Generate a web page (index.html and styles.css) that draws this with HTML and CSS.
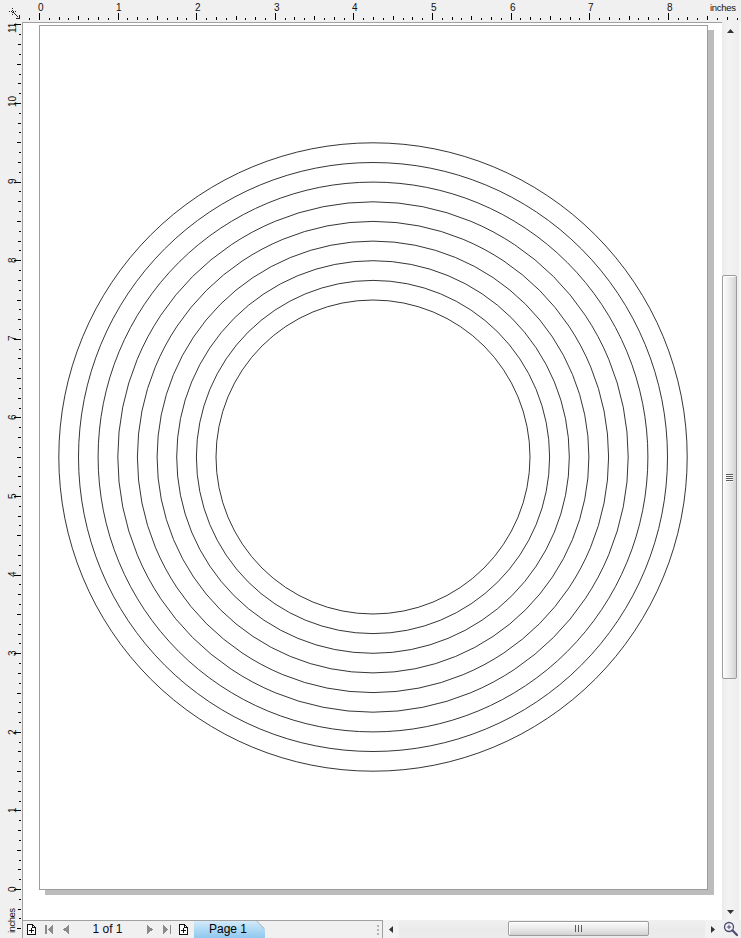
FILE: index.html
```html
<!DOCTYPE html>
<html>
<head>
<meta charset="utf-8">
<title>Drawing</title>
<link rel="stylesheet" href="styles.css">
</head>
<body>
<div class="app">
  <div class="corner">
    <svg width="22" height="22" viewBox="0 0 22 22" class="corner-icon">
      <path d="M9 11.5h7" stroke="#222" stroke-dasharray="1 1"/>
      <path d="M12.5 8v7" stroke="#222" stroke-dasharray="1 1"/>
      <path d="M13.5 12.5l5 5M19.5 15v3.5H16" stroke="#222" fill="none"/>
    </svg>
  </div>

  <div class="hruler">
    <svg class="ruler-svg" width="719" height="22" viewBox="22 0 719 22">
      <path id="hticks" class="ticks" d=""/>
      <g class="ruler-num">
        <text x="38" y="11">0</text>
        <text x="116" y="11">1</text>
        <text x="195" y="11">2</text>
        <text x="274" y="11">3</text>
        <text x="352" y="11">4</text>
        <text x="431" y="11">5</text>
        <text x="510" y="11">6</text>
        <text x="588" y="11">7</text>
        <text x="667" y="11">8</text>
        <text x="710" y="11" textLength="26" class="unit">inches</text>
      </g>
    </svg>
  </div>

  <div class="vruler">
    <svg class="ruler-svg" width="22" height="916" viewBox="0 22 22 916">
      <path id="vticks" class="ticks" d=""/>
      <g class="ruler-num">
        <text transform="translate(16 892) rotate(-90)">0</text>
        <text transform="translate(16 813) rotate(-90)">1</text>
        <text transform="translate(16 735) rotate(-90)">2</text>
        <text transform="translate(16 656) rotate(-90)">3</text>
        <text transform="translate(16 577) rotate(-90)">4</text>
        <text transform="translate(16 499) rotate(-90)">5</text>
        <text transform="translate(16 420) rotate(-90)">6</text>
        <text transform="translate(16 341) rotate(-90)">7</text>
        <text transform="translate(16 263) rotate(-90)">8</text>
        <text transform="translate(16 184) rotate(-90)">9</text>
        <text transform="translate(16 107) rotate(-90)">10</text>
        <text transform="translate(16 33) rotate(-90)">11</text>
        <text transform="translate(15 933) rotate(-90)" textLength="25" class="unit">inches</text>
      </g>
    </svg>
  </div>

  <div class="canvas">
    <div class="page">
      <svg class="rings" width="667" height="863" viewBox="0 0 667 863">
        <g fill="none" stroke="#111" stroke-width="0.85">
          <circle cx="333" cy="431" r="157"/>
          <circle cx="333" cy="431" r="176.6"/>
          <circle cx="333" cy="431" r="196.3"/>
          <circle cx="333" cy="431" r="215.9"/>
          <circle cx="333" cy="431" r="235.6"/>
          <circle cx="333" cy="431" r="255.2"/>
          <circle cx="333" cy="431" r="274.9"/>
          <circle cx="333" cy="431" r="294.5"/>
          <circle cx="333" cy="431" r="314.2"/>
        </g>
      </svg>
    </div>
  </div>

  <div class="vscroll">
    <div class="vbtn">
      <svg width="7" height="4" viewBox="0 0 7 4"><polygon points="3.5,0 7,4 0,4" fill="#333"/></svg>
    </div>
    <div class="vtrack">
      <div class="vthumb">
        <div class="vgrip"><span></span><span></span><span></span><span></span></div>
      </div>
    </div>
    <div class="vbtn">
      <svg width="7" height="4" viewBox="0 0 7 4"><polygon points="0,0 7,0 3.5,4" fill="#333"/></svg>
    </div>
  </div>

  <div class="bottombar">
    <div class="pagenav">
      <div class="nbtn">
        <svg width="9" height="11" viewBox="0 0 9 11"><path d="M0.5 0.5H5.5L8.5 3.5V10.5H0.5Z" fill="#fff" stroke="#111"/><path d="M5.5 0.5V3.5H8.5" fill="none" stroke="#111"/><path d="M2 6.5H7M4.5 4V9" stroke="#111"/></svg>
      </div>
      <div class="nbtn">
        <svg width="8" height="9" viewBox="0 0 8 9"><rect x="0" y="0" width="1.5" height="9" fill="#8a8a8a"/><polygon points="8,0 8,9 3,4.5" fill="#8a8a8a"/></svg>
      </div>
      <div class="nbtn">
        <svg width="6" height="9" viewBox="0 0 6 9"><polygon points="6,0 6,9 0,4.5" fill="#8a8a8a"/></svg>
      </div>
      <div class="pagecount">1 of 1</div>
      <div class="nbtn">
        <svg width="6" height="9" viewBox="0 0 6 9"><polygon points="0,0 0,9 6,4.5" fill="#8a8a8a"/></svg>
      </div>
      <div class="nbtn">
        <svg width="8" height="9" viewBox="0 0 8 9"><polygon points="0,0 0,9 5,4.5" fill="#8a8a8a"/><rect x="6.5" y="0" width="1.5" height="9" fill="#8a8a8a"/></svg>
      </div>
      <div class="nbtn">
        <svg width="9" height="11" viewBox="0 0 9 11"><path d="M0.5 0.5H5.5L8.5 3.5V10.5H0.5Z" fill="#fff" stroke="#111"/><path d="M5.5 0.5V3.5H8.5" fill="none" stroke="#111"/><path d="M2 6.5H7M4.5 4V9" stroke="#111"/></svg>
      </div>
      <div class="pagetab">Page 1</div>
      <div class="tabfill">
        <div class="grip"><span></span><span></span><span></span></div>
      </div>
    </div>
    <div class="sep"></div>
    <div class="hscroll">
      <div class="hbtn">
        <svg width="4" height="7" viewBox="0 0 4 7"><polygon points="4,0 4,7 0,3.5" fill="#333"/></svg>
      </div>
      <div class="htrack">
        <div class="hthumb">
          <div class="hgrip"><span></span><span></span><span></span></div>
        </div>
      </div>
      <div class="hbtn">
        <svg width="4" height="7" viewBox="0 0 4 7"><polygon points="0,0 0,7 4,3.5" fill="#333"/></svg>
      </div>
    </div>
    <div class="zoombtn">
      <svg width="16" height="16" viewBox="0 0 16 16">
        <circle cx="6" cy="6" r="4.5" fill="#f4f4fa" stroke="#4b4b70" stroke-width="1.3"/>
        <path d="M3.8 6H8.2M6 3.8V8.2" stroke="#4b4b70" stroke-width="1"/>
        <path d="M9.3 9.3L14 14" stroke="#4b4b70" stroke-width="2.2" stroke-linecap="round"/>
      </svg>
    </div>
  </div>
</div>
<script src="script.js"></script>
</body>
</html>
```

FILE: styles.css
```css
html, body {
  margin: 0;
  padding: 0;
}

body {
  width: 741px;
  height: 938px;
  overflow: hidden;
  background: #f0f0f0;
  font-family: "Liberation Sans", Arial, sans-serif;
}

.app {
  display: grid;
  grid-template-columns: 22px 700px 19px;
  grid-template-rows: 22px 898px 18px;
  width: 741px;
  height: 938px;
}

.corner {
  grid-column: 1;
  grid-row: 1;
  background: #f0f0f0;
}

.corner-icon {
  display: block;
  shape-rendering: crispEdges;
}

.hruler {
  grid-column: 2 / 4;
  grid-row: 1;
  background: #f0f0f0;
  overflow: hidden;
}

.vruler {
  grid-column: 1;
  grid-row: 2 / 4;
  background: #f0f0f0;
  overflow: hidden;
}

.ruler-svg {
  display: block;
}

.ticks {
  stroke: #000;
  stroke-width: 1;
  fill: none;
  shape-rendering: crispEdges;
}

.ruler-num text {
  font-family: "Liberation Sans", Arial, sans-serif;
  font-size: 10px;
  fill: #111;
}

.ruler-num .unit {
  font-size: 9.5px;
}

.canvas {
  grid-column: 2;
  grid-row: 2;
  box-sizing: border-box;
  background: #fff;
  border-top: 1px solid #a0a0a0;
  border-left: 1px solid #a0a0a0;
  overflow: hidden;
  padding: 2px 0 0 16px;
}

.page {
  width: 667px;
  height: 863px;
  border: 1px solid #9c9c9c;
  background: #fff;
  box-shadow: 6px 5px 0 #bcbcbc;
}

.rings {
  display: block;
}

/* vertical scrollbar */
.vscroll {
  grid-column: 3;
  grid-row: 2;
  display: flex;
  flex-direction: column;
  background: linear-gradient(to right, #ebebeb, #f3f3f3 40%, #ededed);
  border-right: 2px solid #f8f8f8;
}

.vbtn {
  height: 17px;
  display: flex;
  align-items: center;
  justify-content: center;
  padding-right: 1px;
}

.vbtn svg {
  display: block;
}

.vtrack {
  flex: 1;
  display: flex;
  flex-direction: column;
}

.vthumb {
  margin-top: 236px;
  margin-left: 0;
  width: 15px;
  height: 404px;
  box-sizing: border-box;
  border: 1px solid #9c9c9c;
  border-radius: 2px;
  background: linear-gradient(to right, #fbfbfb, #eeeeee 45%, #dedede 80%, #d2d2d2);
  box-shadow: inset 1px 1px 0 #ffffff;
  display: flex;
  align-items: center;
  justify-content: center;
}

.vgrip {
  display: flex;
  flex-direction: column;
  gap: 1px;
}

.vgrip span {
  display: block;
  width: 7px;
  height: 1px;
  background: #5a5a5a;
  box-shadow: 0 1px 0 #fafafa;
}

/* bottom bar */
.bottombar {
  grid-column: 2 / 4;
  grid-row: 3;
  display: flex;
  background: #f0f0f0;
}

.pagenav {
  width: 360px;
  box-sizing: border-box;
  border-top: 1px solid #a0a0a0;
  border-left: 1px solid #a0a0a0;
  display: flex;
  align-items: stretch;
}

.nbtn {
  width: 17px;
  display: flex;
  align-items: center;
  justify-content: center;
}

.nbtn svg {
  display: block;
  shape-rendering: crispEdges;
}

.pagecount {
  width: 67px;
  text-align: center;
  font-size: 12px;
  line-height: 17px;
  color: #0a0a1e;
}

.pagetab {
  width: 71px;
  margin-left: 2px;
  box-sizing: border-box;
  padding-left: 15px;
  font-size: 12px;
  line-height: 17px;
  color: #000;
  background: linear-gradient(#d3eafa, #b2dbf4 45%, #8fc8ef);
  clip-path: polygon(0 0, calc(100% - 8px) 0, 100% 8px, 100% 100%, 0 100%);
  position: relative;
}

.pagetab::after {
  content: "";
  position: absolute;
  right: -1px;
  top: 3px;
  width: 11px;
  height: 1px;
  background: #9a9a9a;
  transform: rotate(45deg);
}

.tabfill {
  flex: 1;
  display: flex;
  justify-content: flex-end;
  align-items: center;
  padding-right: 3px;
}

.grip {
  display: flex;
  flex-direction: column;
  gap: 2px;
}

.grip span {
  display: block;
  width: 2px;
  height: 2px;
  background: #b4b4b4;
}

.sep {
  width: 1px;
  background: #a0a0a0;
}

.hscroll {
  width: 338px;
  display: flex;
  background: linear-gradient(#f0f0f0, #eaeaea 50%, #ececec);
}

.hbtn {
  width: 16px;
  display: flex;
  align-items: center;
  justify-content: center;
  background: #f2f2f2;
}

.hbtn svg {
  display: block;
}

.htrack {
  flex: 1;
  display: flex;
  align-items: flex-start;
}

.hthumb {
  margin-top: 1px;
  margin-left: 109px;
  width: 141px;
  height: 15px;
  box-sizing: border-box;
  border: 1px solid #9c9c9c;
  border-radius: 2px;
  background: linear-gradient(#fbfbfb, #ececec 45%, #dcdcdc 80%, #d0d0d0);
  box-shadow: inset 1px 1px 0 #ffffff;
  display: flex;
  align-items: center;
  justify-content: center;
}

.hgrip {
  display: flex;
  gap: 2px;
}

.hgrip span {
  display: block;
  width: 1px;
  height: 7px;
  background: #5a5a5a;
}

.zoombtn {
  width: 20px;
  display: flex;
  align-items: center;
  justify-content: center;
  background: #f0f0f0;
}

.zoombtn svg {
  display: block;
}
```

FILE: script.js
```js
(function () {
  var step = 78.6 / 8;
  function tickLen(i) {
    var m = ((i % 8) + 8) % 8;
    if (m === 0) return 7;
    if (m === 4) return 4;
    if (m % 2 === 0) return 3;
    return 2;
  }
  var h = '';
  for (var i = -4; i <= 90; i++) {
    var x = Math.round(39 + i * step);
    if (x < 23 || x > 740) continue;
    var len = tickLen(i);
    h += 'M' + (x + 0.5) + ' ' + (20 - len) + 'V20';
  }
  document.getElementById('hticks').setAttribute('d', h);

  var v = '';
  for (var j = -8; j <= 95; j++) {
    var y = Math.round(889 - j * step);
    if (y < 23 || y > 937) continue;
    var l = tickLen(j);
    v += 'M' + (21 - l) + ' ' + (y + 0.5) + 'H21';
  }
  document.getElementById('vticks').setAttribute('d', v);
})();
```
